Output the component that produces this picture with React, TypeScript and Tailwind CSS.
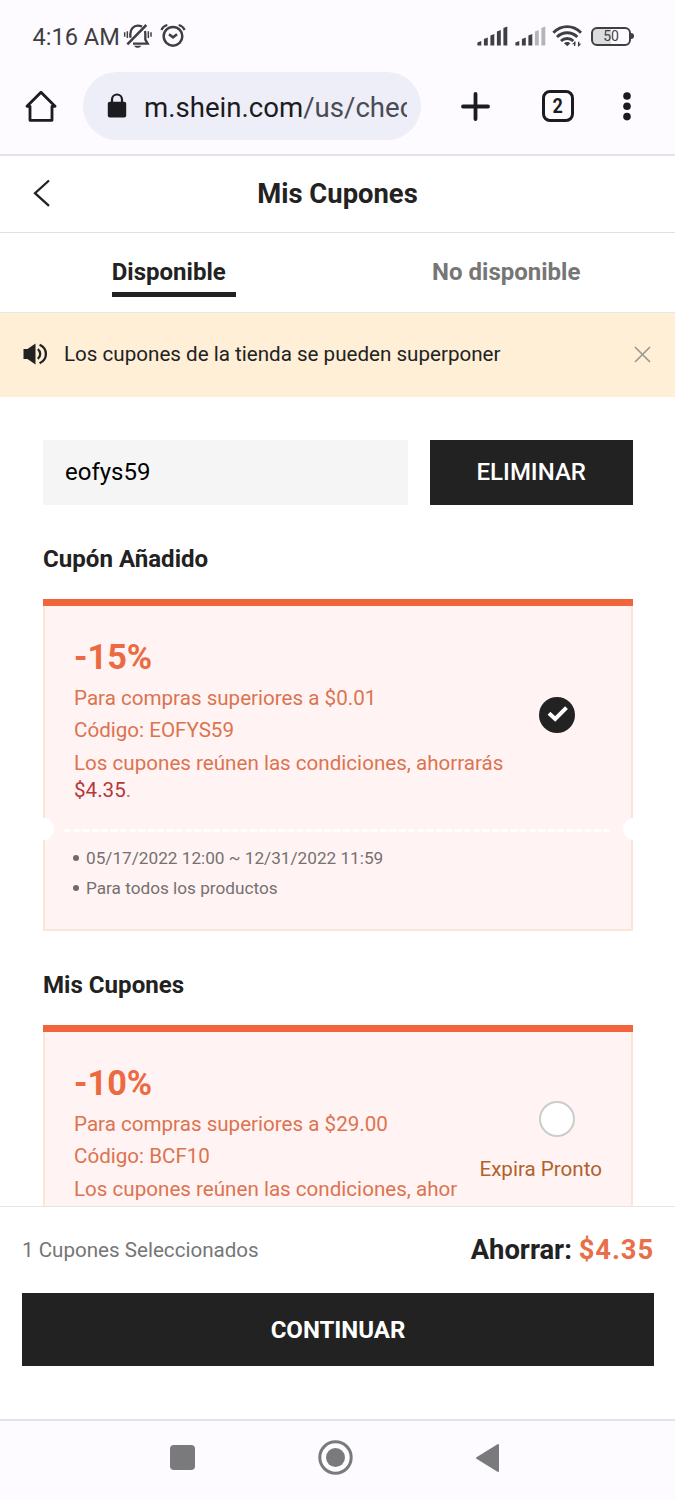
import { useState } from "react";

const BellOffIcon = () => (
  <svg width="30" height="26" viewBox="370 69 90 78" fill="none" stroke="#3f3f42" strokeWidth="7">
    <path d="M392 113V102C392 87 402 77 414 77C419 77 423 78 427 80" />
    <path d="M436 93C437 97 437 100 437 104V119L444 131H400" />
    <path d="M383 133L440 75" strokeWidth="7.5" />
    <path d="M403 137H425C420 145 408 145 403 137Z" fill="#3f3f42" stroke="none" />
    <path d="M375 97V110M383 94V114M446 94V114M454 97V110" strokeWidth="4.5" />
  </svg>
);

const AlarmIcon = () => (
  <svg width="26" height="26" viewBox="482 69 78 78" fill="none" stroke="#3f3f42" strokeWidth="7.5">
    <circle cx="521" cy="109" r="28" />
    <path d="M486 90C490 81 496 77 504 75M538 75C546 77 552 81 556 90" strokeWidth="6.5" />
    <path d="M509 103L521 112L533 103" />
  </svg>
);

const SignalIcon = ({ level }: { level: number }) => (
  <svg width="32" height="20" viewBox="0 0 32 20">
    {[4.5, 8, 11.5, 15.5, 19].map((h, i) => (
      <path
        key={h}
        d={`M${i * 6.5 + 0.4} 19.5v${1.6 - h}l3.9 -1.6v${h}z`}
        fill={i < level ? "#3f3f42" : "#b5b5b8"}
      />
    ))}
  </svg>
);

const WifiIcon = () => (
  <svg width="30" height="24" viewBox="652 72 90 72" fill="none" stroke="#3f3f42" strokeWidth="8.5">
    <path d="M656 98C680 74 715 74 739 98" />
    <path d="M667 111C684 94 711 94 728 111" />
    <path d="M679 123C689 113 706 113 716 123" />
    <path d="M688 130C693 125 702 125 707 130L698 139Z" fill="#3f3f42" stroke="none" />
    <path d="M720 125V138M732 125V138" strokeWidth="4" />
    <path d="M712 133L722 124V133ZM740 131L730 141V131Z" fill="#3f3f42" stroke="none" />
  </svg>
);

const HomeIcon = () => (
  <svg width="32" height="32" viewBox="76 270 96 96" fill="none" stroke="#1b1b20" strokeWidth="8.5">
    <path d="M91 361V319H82L124 277L166 319H157V361Z" strokeLinejoin="round" />
  </svg>
);

const LockIcon = () => (
  <svg width="20" height="26" viewBox="0 0 20 26">
    <path d="M5 10V6.5a5 5 0 0 1 10 0V10" fill="none" stroke="#1b1b20" strokeWidth="2.2" />
    <rect x="0.8" y="8.8" width="18.4" height="15.6" rx="2" fill="#1b1b20" />
  </svg>
);

const SpeakerIcon = () => (
  <svg width="26" height="22" viewBox="0 0 26 22" fill="none" stroke="#222" strokeWidth="2.3">
    <path d="M0.5 6H4.5L12.5 0.5V21.5L4.5 16H0.5Z" fill="#222" stroke="none" />
    <path d="M14.8 6.2C18 8.6 18 13.4 14.8 15.8M16.6 1.8C25 5.6 25 16.4 16.6 20.2" />
  </svg>
);

interface Coupon {
  discount: string;
  minimum: string;
  code: string;
  message: string;
  saving?: string;
  expiring?: boolean;
  rules?: string[];
}

const addedCoupon: Coupon = {
  discount: "-15%",
  minimum: "Para compras superiores a $0.01",
  code: "Código: EOFYS59",
  message: "Los cupones reúnen las condiciones, ahorrarás",
  saving: "$4.35",
  rules: ["05/17/2022 12:00 ~ 12/31/2022 11:59", "Para todos los productos"],
};

const myCoupon: Coupon = {
  discount: "-10%",
  minimum: "Para compras superiores a $29.00",
  code: "Código: BCF10",
  message: "Los cupones reúnen las condiciones, ahor",
  expiring: true,
};

const CouponCard = ({ coupon, selected }: { coupon: Coupon; selected?: boolean }) => (
  <div className="w-[589.5px] shrink-0">
    <div className="h-[7px] bg-[#f2653c]" />
    <div className="relative h-[325px] border-2 border-t-0 border-[#fbe5d9] bg-[#fff4f3]">
      <div className="flex h-[223px] pl-[29px] text-[20.6px] leading-[27px] text-[#dc7350]">
        <div className="flex flex-col whitespace-nowrap pt-[30px]">
          <p className="h-[49px] text-[34.3px] font-bold leading-[42px] text-[#eb6a42]">{coupon.discount}</p>
          <p className="h-8">{coupon.minimum}</p>
          <p className="h-[33px]">{coupon.code}</p>
          <p>{coupon.message}</p>
          {coupon.saving && (
            <p>
              <span className="text-[#b5383b]">{coupon.saving}</span>.
            </p>
          )}
        </div>
      </div>

      {/* Selector */}
      <div
        className={`absolute right-[28.5px] flex flex-col items-end ${
          coupon.expiring ? "top-[69px]" : "top-[91px]"
        }`}
      >
        {selected ? (
          <svg className="mr-[27.5px]" width="36" height="36" viewBox="0 0 36 36">
            <circle cx="18" cy="18" r="18" fill="#222" />
            <path d="M10 16.2L16.2 22L27.5 10.6" fill="none" stroke="#fff" strokeWidth="4" />
          </svg>
        ) : (
          <span className="mr-[27.5px] h-9 w-9 rounded-full border-2 border-[#ccc] bg-white" />
        )}
        {coupon.expiring && (
          <span className="mt-[19px] whitespace-nowrap text-[20.6px] leading-[27px] text-[#b0612c]">
            Expira Pronto
          </span>
        )}
      </div>

      {coupon.rules && (
        <>
          {/* Ticket notches and perforation */}
          <span className="absolute -left-[13px] top-[212px] h-[22px] w-[22px] rounded-full bg-white" />
          <span className="absolute -right-[14px] top-[212px] h-[22px] w-[22px] rounded-full bg-white" />
          <svg className="absolute left-[19px] top-[223px]" width="548" height="3">
            <path d="M0 1.5H548" stroke="#fff" strokeWidth="2.5" strokeDasharray="7 2.3" />
          </svg>
          <ul className="pl-[28px] pt-[13.5px] text-[17.2px] leading-[30.5px] text-[#767070]">
            {coupon.rules.map((rule) => (
              <li key={rule} className="flex items-center">
                <span className="mr-[7px] h-1.5 w-1.5 rounded-full bg-[#706b6b]" />
                {rule}
              </li>
            ))}
          </ul>
        </>
      )}
    </div>
  </div>
);

export default function App() {
  const [code, setCode] = useState("eofys59");
  const [showNotice, setShowNotice] = useState(true);

  return (
    <div className="flex h-[1500px] w-[675px] flex-col overflow-hidden bg-white font-['Roboto',sans-serif] text-[#222]">
      {/* Status bar */}
      <div className="flex h-[72px] shrink-0 items-center bg-[#fdfbff] pl-[32.5px] pr-11 text-[#3f3f42]">
        <span className="w-[90.5px] whitespace-nowrap pt-[3px] text-[23.6px] leading-none">4:16 AM</span>
        <BellOffIcon />
        <span className="ml-[7px]">
          <AlarmIcon />
        </span>
        <div className="ml-auto flex items-center">
          <SignalIcon level={5} />
          <span className="ml-[6px]">
            <SignalIcon level={3} />
          </span>
          <span className="ml-[5px]">
            <WifiIcon />
          </span>
          <div className="relative ml-[9px] flex h-[19px] w-10 items-center justify-center rounded-[6px] border-2 border-[#3f3f42] bg-gradient-to-r from-[#dcdcde] from-50% to-transparent to-50% text-[14px] leading-none">
            50
            <span className="absolute -right-[5px] h-1.5 w-[3px] rounded-r-sm bg-[#3f3f42]" />
          </div>
        </div>
      </div>

      {/* Browser toolbar */}
      <div className="flex h-[84px] shrink-0 items-start border-b-2 border-[#e4e2e9] bg-[#fdfbff] pl-[25px]">
        <div className="mt-[18px]">
          <HomeIcon />
        </div>
        <div className="ml-[26px] flex h-[68px] w-[338px] items-center rounded-full bg-[#edeef8] pl-6">
          <LockIcon />
          <span className="ml-[17px] mt-[3px] w-[263px] overflow-hidden whitespace-nowrap text-[27.6px] leading-9 text-[#1b1b20]">
            m.shein.com<span className="text-[#4a4b55]">/us/chec</span>
          </span>
        </div>
        <svg className="ml-[40px] mt-5" width="29" height="29" viewBox="0 0 29 29">
          <path d="M14.5 2V27M2 14.5H27" stroke="#1b1b20" strokeWidth="3.8" strokeLinecap="round" />
        </svg>
        <div className="ml-[52px] mt-[18px] flex h-8 w-8 items-center justify-center rounded-[8px] border-[3px] border-[#1b1b20] text-[20px] font-bold leading-none text-[#1b1b20]">
          <span className="scale-x-90">2</span>
        </div>
        <svg className="ml-[48px] mt-5" width="10" height="29" viewBox="0 0 10 29" fill="#1b1b20">
          <circle cx="5" cy="4" r="3.8" />
          <circle cx="5" cy="14.3" r="3.8" />
          <circle cx="5" cy="24.6" r="3.8" />
        </svg>
      </div>

      {/* Page header */}
      <header className="flex h-[77px] shrink-0 items-center border-b border-[#e0e0e0] pl-[33px]">
        <svg className="-mt-[3px]" width="18" height="28" viewBox="0 0 18 28" fill="none" stroke="#222" strokeWidth="2.3">
          <path d="M16 1.5L2 14.2L16 26.8" />
        </svg>
        <h1 className="w-[573px] pt-[2px] text-center text-[27.4px] font-bold">Mis Cupones</h1>
      </header>

      {/* Tabs */}
      <nav className="flex h-20 shrink-0 border-b border-[#e8e8e8] text-[24px] font-bold leading-8">
        <div className="flex w-1/2 justify-center pl-[10px] pt-[23px]">
          <span className="h-[41px] w-[124px] border-b-[5px] border-[#222]">Disponible</span>
        </div>
        <div className="flex w-1/2 justify-center pt-[23px] text-[#767676]">
          <span>No disponible</span>
        </div>
      </nav>

      {/* Notice */}
      {showNotice && (
        <div className="flex h-[84px] shrink-0 items-center bg-[#feefd6] pb-0.5 pl-[23px] pr-[24px]">
          <SpeakerIcon />
          <span className="ml-[15px] text-[20.6px]">Los cupones de la tienda se pueden superponer</span>
          <button className="ml-auto" onClick={() => setShowNotice(false)}>
            <svg width="17" height="17" viewBox="0 0 17 17" stroke="#999690" strokeWidth="1.6">
              <path d="M1 1L16 16M16 1L1 16" />
            </svg>
          </button>
        </div>
      )}

      {/* Coupons */}
      <main className="flex min-h-0 flex-1 flex-col overflow-hidden pl-[43px] pt-[43px]">
        <div className="flex h-[65px] w-[589.5px] shrink-0 gap-[22px]">
          <input
            className="w-[365px] bg-[#f5f5f5] px-[22px] pb-0.5 text-[24px] text-black outline-none"
            value={code}
            onChange={(e) => setCode(e.target.value)}
          />
          <button className="flex-1 bg-[#222] pb-0.5 text-[24px] font-medium text-white" onClick={() => setCode("")}>
            ELIMINAR
          </button>
        </div>

        <h2 className="mb-6 mt-[38px] text-[24.1px] font-bold leading-8">Cupón Añadido</h2>
        <CouponCard coupon={addedCoupon} selected />

        <h2 className="mb-6 mt-[38px] text-[24.1px] font-bold leading-8">Mis Cupones</h2>
        <CouponCard coupon={myCoupon} />
      </main>

      {/* Checkout footer */}
      <footer className="h-[213px] shrink-0 border-t border-[#e5e5e5] bg-white pl-[22px] pr-[21px]">
        <div className="flex h-[86px] items-center justify-between">
          <span className="text-[20.6px] text-[#767676]">1 Cupones Seleccionados</span>
          <span className="pt-[2px] text-[27.4px] font-bold">
            Ahorrar: <span className="tracking-[0.9px] text-[#e96f4a]">$4.35</span>
          </span>
        </div>
        <button className="h-[72.5px] w-full bg-[#222] pt-px text-[24px] font-bold text-white">CONTINUAR</button>
      </footer>

      {/* System navigation */}
      <div className="flex h-[81px] shrink-0 items-center border-t-2 border-[#e4e2e9] bg-[#fdfbff] pb-1.5 pl-[170px]">
        <span className="h-[25px] w-[25px] rounded-[4px] bg-[#7a797c]" />
        <svg className="ml-[123px]" width="35" height="35" viewBox="0 0 35 35">
          <circle cx="17.5" cy="17.5" r="15.7" fill="#fff" stroke="#7a797c" strokeWidth="3" />
          <circle cx="17.5" cy="17.5" r="9.5" fill="#7a797c" />
        </svg>
        <svg className="ml-[122px]" width="25" height="30" viewBox="0 0 25 30">
          <path d="M2 15L23 2V28Z" fill="#7a797c" stroke="#7a797c" strokeWidth="2" strokeLinejoin="round" />
        </svg>
      </div>
    </div>
  );
}
